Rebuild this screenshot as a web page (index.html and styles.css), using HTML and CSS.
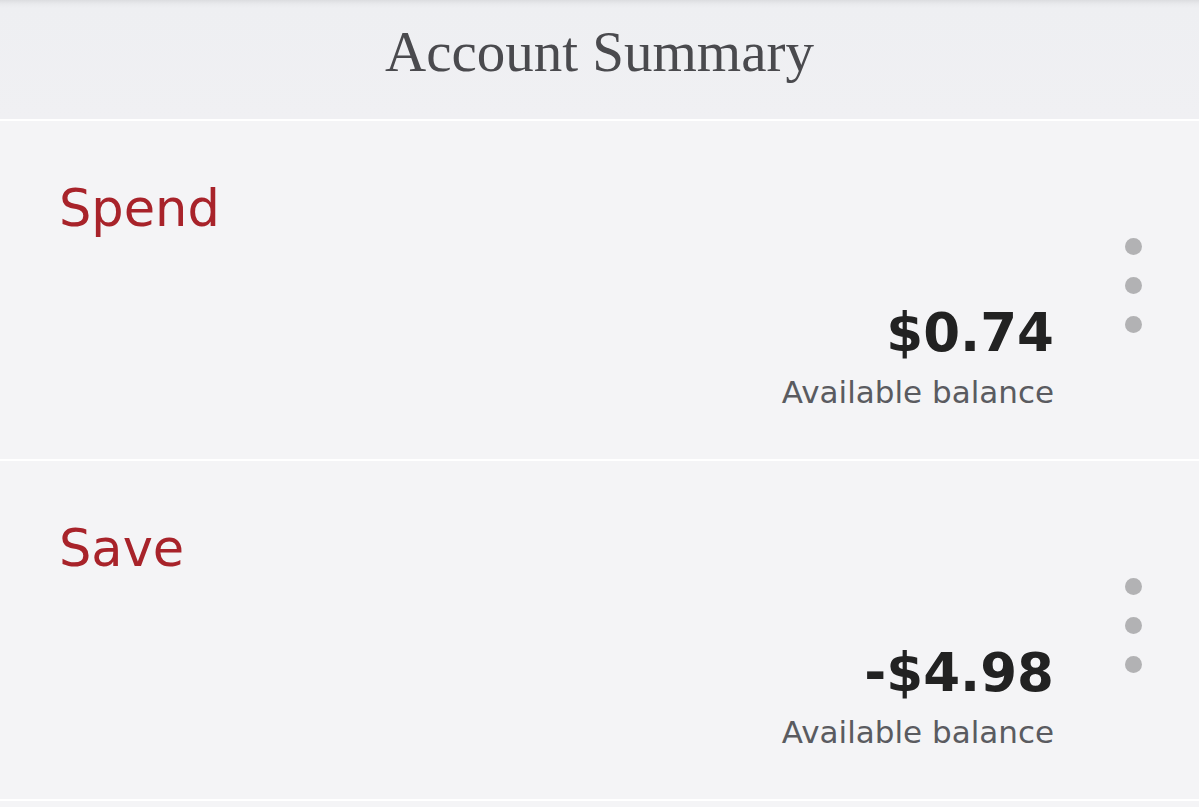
FILE: index.html
```html
<!DOCTYPE html>
<html>
<head>
<meta charset="utf-8">
<link rel="stylesheet" href="styles.css">
</head>
<body>
<div class="app">
  <header class="topbar">
    <h1 class="title">Account Summary</h1>
  </header>
  <section class="account">
    <div class="account-name">Spend</div>
    <div class="account-row">
      <div class="balance">
        <div class="amount">$0.74</div>
        <div class="label">Available balance</div>
      </div>
      <div class="dots"><span></span><span></span><span></span></div>
    </div>
  </section>
  <section class="account">
    <div class="account-name">Save</div>
    <div class="account-row">
      <div class="balance">
        <div class="amount">-$4.98</div>
        <div class="label">Available balance</div>
      </div>
      <div class="dots"><span></span><span></span><span></span></div>
    </div>
  </section>
</div>
</body>
</html>
```
FILE: styles.css
```css
html, body {
  margin: 0;
  padding: 0;
  background: #fcfcfc;
}
.app {
  width: 1199px;
  height: 807px;
  overflow: hidden;
  background: #f4f4f6;
}
.topbar {
  height: 119px;
  background: linear-gradient(#dcdde0 0, #e9eaed 4px, #eeeff2 8px, #f0f0f3 100%);
  border-bottom: 2px solid #ffffff;
  display: flex;
  justify-content: center;
}
.title {
  margin: 0;
  padding-top: 20px;
  font-family: "Liberation Serif", "DejaVu Serif", serif;
  font-weight: normal;
  font-size: 57px;
  line-height: 64px;
  color: #4a4a4e;
}
.account {
  padding: 58px 57px 49px 59px;
  border-bottom: 2px solid #ffffff;
  background: #f4f4f6;
}
.account-name {
  font-family: "DejaVu Sans", Verdana, sans-serif;
  font-size: 51px;
  line-height: 60px;
  color: #a8232a;
}
.account-row {
  display: flex;
  justify-content: flex-end;
  align-items: flex-start;
}
.balance {
  margin-top: 64px;
  text-align: right;
  font-family: "DejaVu Sans", Verdana, sans-serif;
}
.amount {
  font-size: 53px;
  font-weight: bold;
  line-height: 60px;
  color: #222222;
}
.label {
  margin-top: 11px;
  font-size: 31px;
  line-height: 36px;
  color: #5a5b60;
}
.dots {
  margin-left: 71px;
  margin-top: -1px;
  display: flex;
  flex-direction: column;
  gap: 22px;
}
.dots span {
  width: 17px;
  height: 17px;
  border-radius: 50%;
  background: #b2b2b4;
}
```
